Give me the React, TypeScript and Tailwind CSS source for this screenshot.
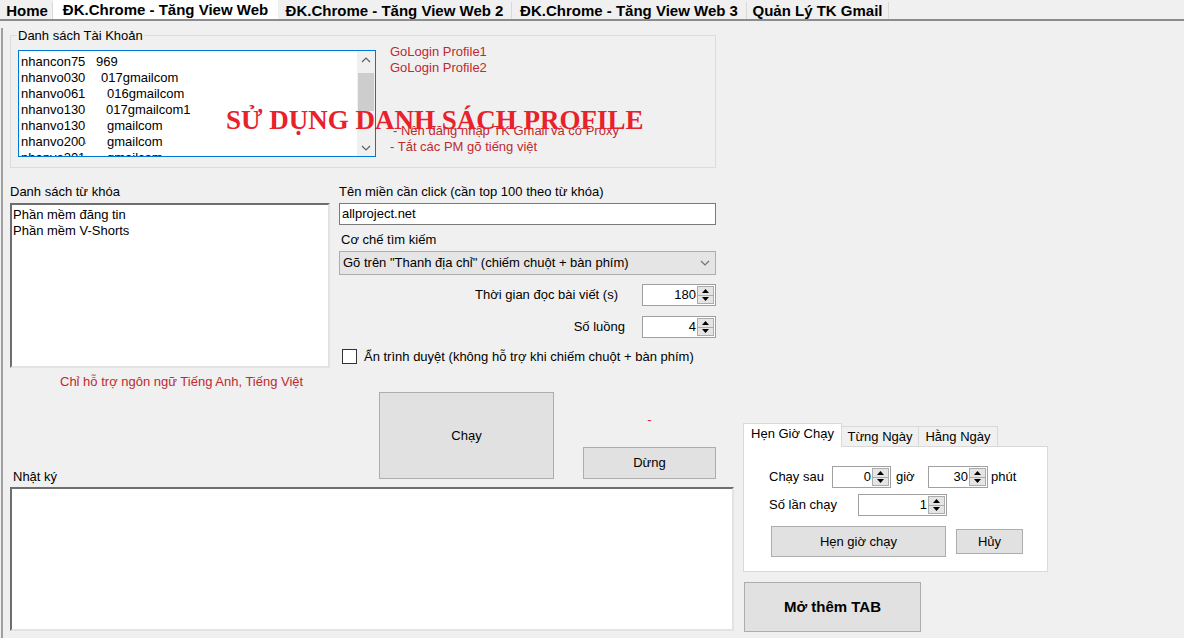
import React from 'react';

const accounts = [
  { a: 'nhancon75', b: '969', gap: 'ml-[10px]' },
  { a: 'nhanvo030', b: '017gmailcom', gap: 'ml-[15px]' },
  { a: 'nhanvo061', b: '016gmailcom', gap: 'ml-[21px]' },
  { a: 'nhanvo130', b: '017gmailcom1', gap: 'ml-[20px]' },
  { a: 'nhanvo130', b: 'gmailcom', gap: 'ml-[21px]' },
  { a: 'nhanvo2004', b: 'gmailcom', gap: 'ml-[21px]' },
  { a: 'nhanvo2010', b: 'gmailcom', gap: 'ml-[21px]' },
];

function Tri({ up }: { up?: boolean }) {
  return (
    <svg width="7" height="4" viewBox="0 0 7 4">
      <polygon points={up ? '0,4 7,4 3.5,0' : '0,0 7,0 3.5,4'} fill="#000" />
    </svg>
  );
}

function Numeric({ className, value }: { className: string; value: string }) {
  return (
    <div className={`flex h-[22px] border border-[#a0a0a0] bg-white ${className}`}>
      <div className="flex-1 pr-[1px] text-right leading-[19px]">{value}</div>
      <div className="flex w-[18px] flex-col py-[1px] pr-[1px]">
        <div className="flex flex-1 items-center justify-center border border-[#acacac] bg-[#e5e5e5]">
          <Tri up />
        </div>
        <div className="flex flex-1 items-center justify-center border border-t-0 border-[#acacac] bg-[#e5e5e5]">
          <Tri />
        </div>
      </div>
    </div>
  );
}

function Chevron({ up, color = '#606060' }: { up?: boolean; color?: string }) {
  return (
    <svg width="10" height="6" viewBox="0 0 10 6">
      <polyline
        points={up ? '1,5 5,1 9,5' : '1,1 5,5 9,1'}
        fill="none"
        stroke={color}
        strokeWidth="1.2"
      />
    </svg>
  );
}

const inset =
  'border-2 border-t-[#6e6e6e] border-l-[#6e6e6e] border-b-[#e3e3e3] border-r-[#e3e3e3] bg-white';

export default function App() {
  return (
    <div className="relative h-[638px] w-[1184px] overflow-hidden bg-[#f0f0f0] font-['Liberation_Sans',Arial,sans-serif] text-[13px] text-black">
      {/* main tabs */}
      <div className="flex h-[21px] items-start border-b-2 border-[#8c8c8c] pl-[2px] text-[15px] font-bold leading-[17px]">
        <div className="mt-[2px] h-[17px] w-[51px] border-r border-[#d9d9d9] text-center">Home</div>
        <div className="h-[19px] w-[225px] bg-white pt-[1px] text-center">ĐK.Chrome - Tăng View Web</div>
        <div className="mt-[2px] h-[17px] w-[234px] border-r border-[#d9d9d9] text-center">ĐK.Chrome - Tăng View Web 2</div>
        <div className="mt-[2px] h-[17px] w-[235px] border-r border-[#d9d9d9] text-center">ĐK.Chrome - Tăng View Web 3</div>
        <div className="mt-[2px] h-[17px] w-[142px] border-r border-[#d9d9d9] text-center">Quản Lý TK Gmail</div>
      </div>

      <div className="ml-[1px] h-[617px] border-l-2 border-[#a0a0a0]">
        {/* account group */}
        <fieldset className="ml-[7px] mt-[7px] h-[140px] w-[706px] border border-[#dcdcdc]">
          <legend className="ml-[6px] px-[1px] leading-[15px]">Danh sách Tài Khoản</legend>
          <div className="flex">
            <div className="ml-[7px] mt-[7px] flex h-[107px] w-[358px] border border-[#0078d7] bg-white">
              <div className="flex-1 overflow-hidden pl-[2px] pt-[3px] leading-[16px]">
                {accounts.map((r, i) => (
                  <div key={i} className="flex whitespace-nowrap">
                    <span className="inline-block w-[65px] overflow-hidden">{r.a}</span>
                    <span className={r.gap}>{r.b}</span>
                  </div>
                ))}
              </div>
              <div className="flex w-[18px] flex-col bg-[#f0f0f0]">
                <div className="flex h-[17px] items-center justify-center">
                  <Chevron up />
                </div>
                <div className="mx-[1px] mt-[5px] h-[38px] bg-[#cdcdcd]" />
                <div className="mt-auto flex h-[17px] items-center justify-center">
                  <Chevron />
                </div>
              </div>
            </div>
            <div className="ml-[14px] flex flex-col leading-[16px] text-[#bf2a2f]">
              <div className="mt-[1px]">GoLogin Profile1</div>
              <div>GoLogin Profile2</div>
              <div className="ml-[3px] mt-[47px]">- Nên đăng nhập TK Gmail và có Proxy</div>
              <div>- Tắt các PM gõ tiếng việt</div>
            </div>
          </div>
        </fieldset>

        {/* keywords + settings */}
        <div className="mt-[16px] flex">
          <div className="ml-[7px] flex w-[320px] flex-col">
            <div className="leading-[15px]">Danh sách từ khóa</div>
            <div className={`mt-[4px] h-[165px] pl-[1px] pt-[2px] leading-[16px] ${inset}`}>
              <div>Phần mềm đăng tin</div>
              <div>Phần mềm V-Shorts</div>
            </div>
            <div className="mt-[6px] pl-[50px] leading-[15px] text-[#bf2a2f]">Chỉ hỗ trợ ngôn ngữ Tiếng Anh, Tiếng Việt</div>
          </div>

          <div className="ml-[9px] flex w-[377px] flex-col">
            <div className="leading-[15px]">Tên miền cần click (cần top 100 theo từ khóa)</div>
            <div className="mt-[4px] h-[22px] border border-[#7a7a7a] bg-white pl-[2px] leading-[20px]">allproject.net</div>
            <div className="mt-[7px] pl-[2px] leading-[15px]">Cơ chế tìm kiếm</div>
            <div className="mt-[4px] flex h-[24px] items-center justify-between border border-[#adadad] bg-[#e5e5e5] pl-[3px] pr-[5px]">
              <span>Gõ trên "Thanh địa chỉ" (chiếm chuột + bàn phím)</span>
              <Chevron color="#707070" />
            </div>
            <div className="mt-[9px] flex items-center justify-end">
              <span className="mr-[24px]">Thời gian đọc bài viết (s)</span>
              <Numeric className="w-[74px]" value="180" />
            </div>
            <div className="mt-[10px] flex items-center justify-end">
              <span className="mr-[17px]">Số luồng</span>
              <Numeric className="w-[74px]" value="4" />
            </div>
            <div className="mt-[11px] flex items-center">
              <div className="ml-[3px] h-[15px] w-[15px] border border-[#333] bg-white" />
              <span className="ml-[7px] leading-[15px]">Ẩn trình duyệt (không hỗ trợ khi chiếm chuột + bàn phím)</span>
            </div>
          </div>
        </div>

        {/* bottom area */}
        <div className="mt-[3px] flex">
          <div className="ml-[7px] flex w-[724px] flex-col">
            <div className="flex h-[87px]">
              <div className="ml-[369px] flex h-[87px] w-[175px] items-center justify-center border border-[#adadad] bg-[#e1e1e1]">
                Chạy
              </div>
              <div className="ml-[29px] flex h-[87px] w-[133px] flex-col">
                <div className="mt-[20px] text-center leading-[15px] text-[#e0202a]">-</div>
                <div className="mt-auto flex h-[32px] items-center justify-center border border-[#adadad] bg-[#e1e1e1]">
                  Dừng
                </div>
              </div>
            </div>
            <div className="-mt-[10px] pl-[3px] leading-[15px]">Nhật ký</div>
            <div className={`mt-[3px] h-[144px] ${inset}`} />
          </div>

          <div className="ml-[9px] mt-[31px] flex flex-col">
            <div className="flex h-[24px] items-start">
              <div className="relative z-10 h-[24px] w-[99px] border border-b-0 border-[#d9d9d9] bg-white pt-[2px] text-center leading-[16px]">
                Hẹn Giờ Chạy
              </div>
              <div className="mt-[3px] h-[21px] w-[77px] border-t border-r border-[#d9d9d9] text-center leading-[19px]">Từng Ngày</div>
              <div className="mt-[3px] h-[21px] w-[79px] border-t border-r border-[#d9d9d9] text-center leading-[19px]">Hằng Ngày</div>
            </div>
            <div className="-mt-[1px] h-[126px] w-[305px] border border-[#d9d9d9] bg-white pl-[25px] pt-[19px]">
              <div className="flex items-center">
                <span className="w-[63px]">Chạy sau</span>
                <Numeric className="w-[59px]" value="0" />
                <span className="ml-[5px] w-[32px]">giờ</span>
                <Numeric className="w-[60px]" value="30" />
                <span className="ml-[3px]">phút</span>
              </div>
              <div className="mt-[6px] flex items-center">
                <span className="w-[89px]">Số lần chạy</span>
                <Numeric className="w-[89px]" value="1" />
              </div>
              <div className="mt-[10px] flex items-center">
                <div className="ml-[2px] flex h-[31px] w-[175px] items-center justify-center border border-[#adadad] bg-[#e1e1e1]">
                  Hẹn giờ chạy
                </div>
                <div className="ml-[10px] flex h-[25px] w-[67px] items-center justify-center border border-[#adadad] bg-[#e1e1e1]">
                  Hủy
                </div>
              </div>
            </div>
            <div className="ml-[1px] mt-[10px] flex h-[50px] w-[177px] items-center justify-center border border-[#adadad] bg-[#e1e1e1] text-[15px] font-bold">
              Mở thêm TAB
            </div>
          </div>
        </div>
      </div>

      {/* overlay title */}
      <div className="absolute left-[226px] top-[105px] whitespace-nowrap font-['Liberation_Serif','Times_New_Roman',serif] text-[27px] font-bold leading-[30px] text-[#e8212b]">
        SỬ DỤNG DANH SÁCH PROFILE
      </div>
    </div>
  );
}
